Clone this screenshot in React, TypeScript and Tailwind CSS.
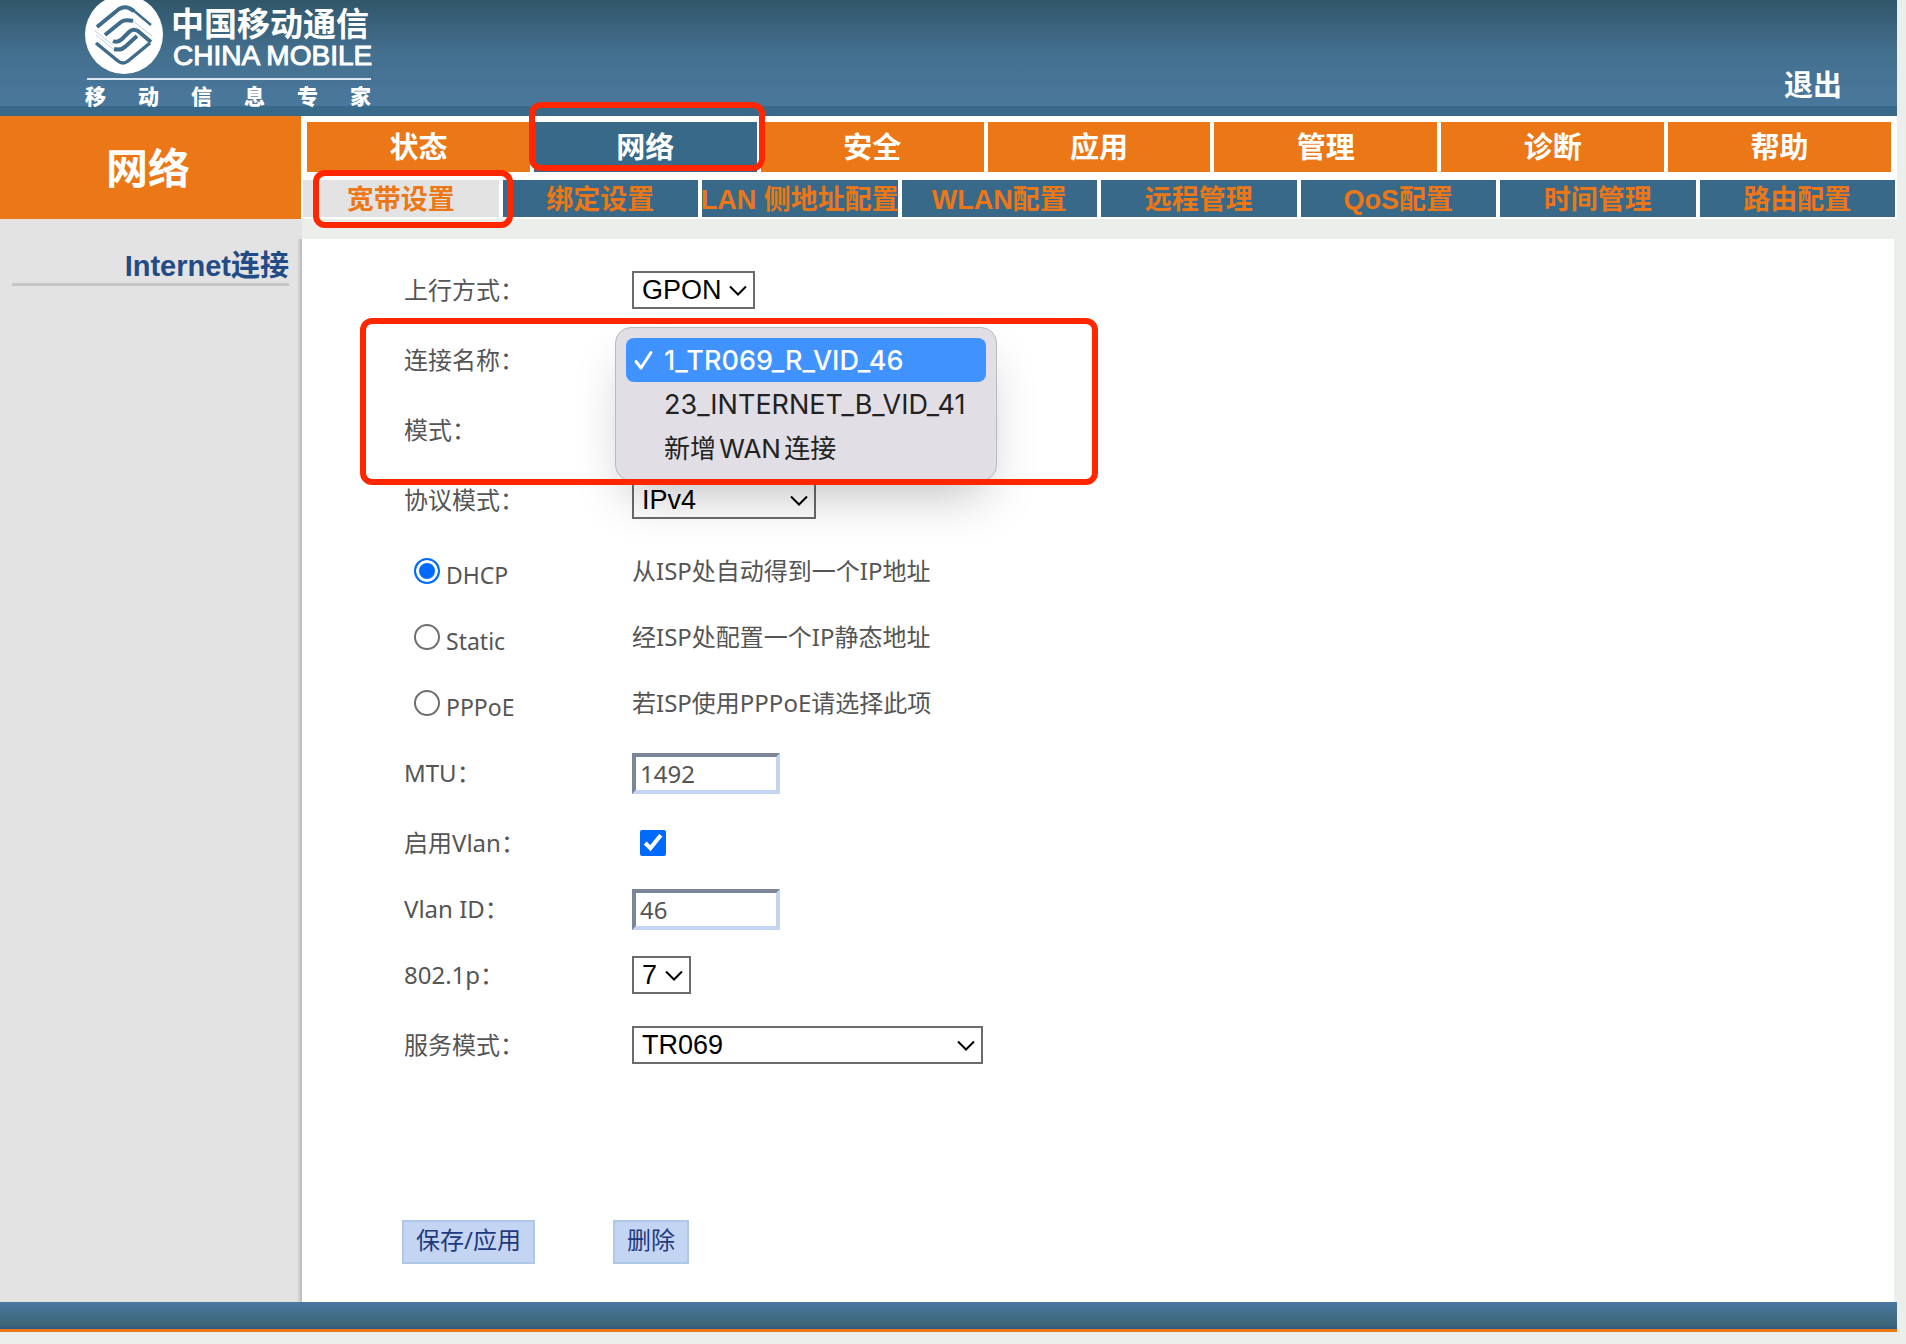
import type { ReactNode } from "react";

const tabs = ["状态", "网络", "安全", "应用", "管理", "诊断", "帮助"];

const subTabs = [
  "宽带设置",
  "绑定设置",
  "LAN 侧地址配置",
  "WLAN配置",
  "远程管理",
  "QoS配置",
  "时间管理",
  "路由配置",
];

const connections = [
  { name: "1_TR069_R_VID_46", size: "text-[27px] font-medium" },
  { name: "23_INTERNET_B_VID_41", size: "text-[27px]" },
  { name: "新增WAN连接", size: "text-[26px]" },
];

const modes = [
  { id: "dhcp", name: "DHCP", text: "从ISP处自动得到一个IP地址" },
  { id: "static", name: "Static", text: "经ISP处配置一个IP静态地址" },
  { id: "pppoe", name: "PPPoE", text: "若ISP使用PPPoE请选择此项" },
];

const inputClass =
  "h-[41px] w-[148px] border-4 border-[#c4d4f3] border-t-[#7b8699] border-l-[#7b8699] pl-1";

function Logo() {
  return (
    <svg
      viewBox="0 0 290 106"
      className="ml-[84px] h-[106px] w-[290px] overflow-visible"
      role="img"
      aria-label="中国移动通信 CHINA MOBILE"
    >
      <ellipse cx="40" cy="34.5" rx="39" ry="39.5" fill="#fff" />
      <g fill="none" stroke="#3f6c8a" strokeLinejoin="round">
        <path strokeWidth="4" d="M13 27 L35 9 Q40 6 45 8 L50 11" />
        <path strokeWidth="2.5" d="M49 10 L67 25" />
        <path strokeWidth="4" d="M21 35 L37 22 Q41 19 49 21" />
        <path strokeWidth="4" d="M29 41 Q34 43 38 39 L45 32 Q49 28 54 31 L67 42" />
        <path strokeWidth="4" d="M30 49 Q37 51 42 46 L53 36" />
        <path strokeWidth="3.5" d="M12 43 L34 61 Q39 65 44 61 L66 43" />
        <path strokeWidth="1" stroke="#b9cfe2" d="M11 31 L29 45 M12 35 L29 49 M49 21 L68 36" />
      </g>
      <g fill="#fff" fontFamily="'Liberation Sans', 'Noto Sans CJK SC', sans-serif">
        <text x="87" y="36" fontSize="33" fontWeight="700">
          中国移动通信
        </text>
        <text x="89" y="65" fontSize="28" stroke="#fff">
          CHINA MOBILE
        </text>
        <rect x="3" y="78" width="284" height="2" fill="#dbe7f2" />
        {["移", "动", "信", "息", "专", "家"].map((c, i) => (
          <text key={c} x={1 + i * 53} y="104" fontSize="21" fontWeight="900">
            {c}
          </text>
        ))}
      </g>
    </svg>
  );
}

function Row({
  label,
  htmlFor,
  height,
  children,
}: {
  label: string;
  htmlFor: string;
  height: string;
  children?: ReactNode;
}) {
  return (
    <div className={`flex items-center ${height}`}>
      <label htmlFor={htmlFor} className="w-[228px] shrink-0">
        {label}
      </label>
      {children}
    </div>
  );
}

function Select({ id, value, width }: { id: string; value: string; width: string }) {
  return (
    <div className={`relative ${width}`}>
      <select
        id={id}
        defaultValue={value}
        className="block h-[38px] w-full appearance-none border-2 border-[#6b6b6b] bg-white pl-2 font-['Liberation_Sans',sans-serif] text-[27px] leading-8 text-black"
      >
        <option>{value}</option>
      </select>
      <svg
        viewBox="0 0 18 12"
        className="pointer-events-none absolute top-[14px] right-2 h-3 w-[18px]"
        fill="none"
        stroke="#000"
        strokeWidth="2"
        aria-hidden="true"
      >
        <path d="M1 1.5 L9 9.5 L17 1.5" />
      </svg>
    </div>
  );
}

export default function App() {
  return (
    <div className="min-h-screen bg-[#eceeeb] pr-[9px] font-['Liberation_Sans','Noto_Sans_CJK_SC',sans-serif]">
      <header className="flex items-start justify-between border-b-10 border-[#396989] bg-linear-to-b from-[#30566a] via-[#44708f] via-50% to-[#4a789c]">
        <Logo />
        <a href="#logout" className="mt-[66px] mr-[55px] text-[29px] leading-10 font-bold text-white">
          退出
        </a>
      </header>

      <div className="flex bg-white">
        <h1 className="flex h-[103px] w-[301px] shrink-0 items-center justify-center bg-[#ec7717] pt-[3px] pr-[5px] text-[42px] font-bold text-white">
          网络
        </h1>
        <div className="min-w-0 flex-1">
          <nav className="relative mx-[6px] mt-[6px] grid grid-cols-7 gap-1">
            {tabs.map((tab) => (
              <a
                key={tab}
                href="#tab"
                className={`flex h-[50px] items-center justify-center pt-1 text-[29px] font-bold text-white ${tab === "网络" ? "bg-[#396989]" : "bg-[#ec7717]"}`}
              >
                {tab}
              </a>
            ))}
            <div className="pointer-events-none absolute -top-5 left-[222px] h-[69px] w-[236px] rounded-xl border-6 border-[#ff2600]" />
          </nav>
          <nav className="relative mx-[2px] mt-2 grid grid-cols-8 gap-1">
            {subTabs.map((tab, i) => (
              <a
                key={tab}
                href="#subtab"
                className={`flex h-[37px] items-center justify-center pt-[3px] text-[27px] font-bold whitespace-nowrap text-[#ec7717] ${i === 0 ? "bg-[#e3e3e3]" : "bg-[#396989]"}`}
              >
                {tab}
              </a>
            ))}
            <div className="pointer-events-none absolute -top-[10px] left-[10px] h-[58px] w-[200px] rounded-xl border-6 border-[#ff2600]" />
          </nav>
        </div>
      </div>

      <div className="flex">
        <aside className="flex w-[302px] shrink-0 bg-[#e3e3e3] pt-5">
          <div className="min-w-0 flex-1 pt-[10px] pr-2 pl-3">
            <a
              href="#internet"
              className="block border-b-3 border-[#c6c6c6] text-right text-[29px] leading-[34px] font-bold text-[#234b86]"
            >
              Internet连接
            </a>
          </div>
          <div className="w-[5px] bg-linear-to-r from-[#e3e3e3] to-[#b8b8b8]" />
        </aside>

        <main className="mt-5 mr-[3px] min-w-0 flex-1 bg-white pt-4 pb-[38px] pl-[102px] font-['Noto_Sans','Noto_Sans_CJK_SC',sans-serif] text-2xl text-[#555]">
          <Row label="上行方式：" htmlFor="uplink" height="h-[70px]">
            <Select id="uplink" value="GPON" width="w-[123px]" />
          </Row>

          <div className="relative">
            <Row label="连接名称：" htmlFor="connection" height="h-[70px]" />
            <Row label="模式：" htmlFor="connection" height="h-[70px]" />
            <ul
              id="connection"
              role="listbox"
              className="absolute top-[2px] left-[211px] z-10 h-[154px] w-[382px] rounded-2xl border border-[#bbb] bg-[#e1dee5] p-[10px] font-['Inter','Noto_Sans_CJK_SC',sans-serif] text-[#222] shadow-2xl"
            >
              {connections.map((item, i) => (
                <li
                  key={item.name}
                  role="option"
                  aria-selected={i === 0}
                  className={`flex h-11 items-center rounded-lg pt-[2px] pl-[7px] whitespace-nowrap [text-autospace:normal] ${item.size} ${i === 0 ? "bg-[#4093ff] text-white" : ""}`}
                >
                  <span className="w-[31px]">
                    {i === 0 && (
                      <svg
                        viewBox="0 0 22 22"
                        className="size-[22px]"
                        fill="none"
                        stroke="currentColor"
                        strokeWidth="3"
                        strokeLinecap="round"
                        strokeLinejoin="round"
                        aria-hidden="true"
                      >
                        <path d="M3 11.5 L8 18 L18 2.5" />
                      </svg>
                    )}
                  </span>
                  {item.name}
                </li>
              ))}
            </ul>
            <div className="pointer-events-none absolute -top-[7px] -left-[44px] z-20 h-[167px] w-[738px] rounded-xl border-6 border-[#ff2600]" />
          </div>

          <Row label="协议模式：" htmlFor="protocol" height="h-[70px]">
            <Select id="protocol" value="IPv4" width="w-[184px]" />
          </Row>

          <div className="pt-[3px]">
            {modes.map((mode, i) => (
              <div key={mode.id} className="flex h-[66px] items-center">
                <label className="flex w-[228px] shrink-0 items-center gap-[6px] pl-[10px]">
                  <input
                    type="radio"
                    name="mode"
                    defaultChecked={i === 0}
                    className="size-[26px] appearance-none rounded-full border-2 border-[#6f6f6f] checked:border-[#006aff] checked:bg-[#006aff] checked:shadow-[inset_0_0_0_3px_#fff]"
                  />
                  <span className="pt-2 text-[23px]">{mode.name}</span>
                </label>
                <span>{mode.text}</span>
              </div>
            ))}
          </div>

          <Row label="MTU：" htmlFor="mtu" height="h-[74px]">
            <input id="mtu" defaultValue="1492" className={inputClass} />
          </Row>
          <Row label="启用Vlan：" htmlFor="vlan" height="h-[66px]">
            <input id="vlan" type="checkbox" defaultChecked className="ml-2 size-[26px] accent-[#006aff]" />
          </Row>
          <Row label="Vlan ID：" htmlFor="vlanid" height="h-[66px]">
            <input id="vlanid" defaultValue="46" className={inputClass} />
          </Row>
          <Row label="802.1p：" htmlFor="priority" height="h-[66px]">
            <Select id="priority" value="7" width="w-[59px]" />
          </Row>
          <Row label="服务模式：" htmlFor="service" height="h-[74px]">
            <Select id="service" value="TR069" width="w-[351px]" />
          </Row>

          <div className="mt-[138px] -ml-[2px] flex gap-[78px] text-[#1f3a7d]">
            <button type="button" className="h-11 border-2 border-[#b0c8e8] bg-[#c4d4f3] px-3 pb-1">
              保存/应用
            </button>
            <button type="button" className="h-11 border-2 border-[#b0c8e8] bg-[#c4d4f3] px-3 pb-1">
              删除
            </button>
          </div>
        </main>
      </div>

      <footer className="h-[30px] border-b-3 border-[#ec7717] bg-linear-to-b from-[#4a789f] via-[#3c6678] via-85% to-[#2e5580]" />
    </div>
  );
}
